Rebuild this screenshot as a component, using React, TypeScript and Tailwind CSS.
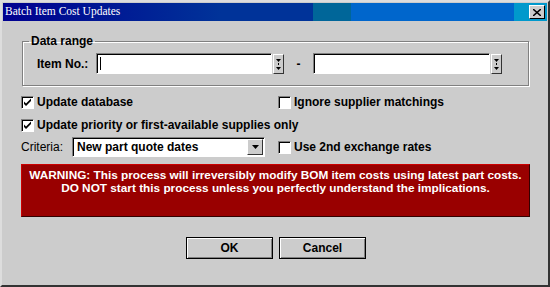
import React from "react";

const FONT = { fontFamily: '"Liberation Sans", Arial, sans-serif' };

function Spin() {
  return (
    <div className="w-[11px] h-[20px] bg-[#cccccc] border border-t-white border-l-white border-r-[#333] border-b-[#333] flex items-center justify-center">
      <svg width="5" height="14" viewBox="0 0 5 14">
        <path d="M0 2h5L2.5 5z" fill="#000" />
        <rect x="2" y="6" width="1" height="2" fill="#000" />
        <path d="M0 10h5L2.5 13z" fill="#000" />
      </svg>
    </div>
  );
}

function Check({ checked, label, bold = true }: { checked?: boolean; label: string; bold?: boolean }) {
  return (
    <label className="flex items-center gap-[3px] h-[18px]">
      <span className="w-[13px] h-[13px] bg-white border border-t-[#808080] border-l-[#808080] border-r-white border-b-white shadow-[inset_1px_1px_0_#000] flex items-center justify-center">
        {checked && (
          <svg width="9" height="9" viewBox="0 0 9 9">
            <path d="M1 3.5l2 2 5-5v2.5l-5 5-2-2z" fill="#000" />
          </svg>
        )}
      </span>
      <span className={`text-[12px] text-black ${bold ? "font-bold" : ""}`}>{label}</span>
    </label>
  );
}

function Btn({ children }: { children: React.ReactNode }) {
  return (
    <button className="w-[87px] h-[22px] bg-[#cccccc] border border-black shadow-[inset_1px_1px_0_#fff,inset_-1px_-1px_0_#808080] text-[12px] font-bold text-black">
      {children}
    </button>
  );
}

export default function App() {
  return (
    <div
      style={FONT}
      className="w-[550px] h-[287px] bg-[#cccccc] border-[2px] border-t-[#dddddd] border-l-[#dddddd] border-r-[#333] border-b-[#333] p-[1px] flex flex-col"
    >
      {/* Title bar */}
      <div className="h-[18px] flex items-center justify-between bg-[linear-gradient(90deg,#000090_0%,#003399_40%,#003399_57%,#006699_57%,#006699_64%,#0066cc_64%,#0066cc_94%,#0099cc_94%)]">
        <span
          className="text-white text-[11.5px] pl-[2px] leading-none"
          style={{ fontFamily: '"Liberation Serif", "Times New Roman", serif' }}
        >
          Batch Item Cost Updates
        </span>
        <button className="w-[16px] h-[14px] mr-[2px] bg-[#cccccc] border border-t-white border-l-white border-r-black border-b-black flex items-center justify-center">
          <svg width="8" height="7" viewBox="0 0 8 7">
            <path d="M0 0l8 7M8 0L0 7" stroke="#000" strokeWidth="1.5" />
          </svg>
        </button>
      </div>

      <div className="flex flex-col px-[16px]">
        {/* Data range group */}
        <fieldset className="mt-[13px] ml-[3px] w-[507px] h-[52px] border border-[#808080] shadow-[1px_1px_0_#fff,inset_1px_1px_0_#fff] px-[6px]">
          <legend className="px-[2px] text-[12px] font-bold text-black leading-[14px]">Data range</legend>
          <div className="flex items-center mt-[5px]">
            <span className="text-[12px] font-bold ml-[8px] w-[59px]">Item No.:</span>
            <div className="w-[176px] h-[21px] bg-white border border-t-[#808080] border-l-[#808080] border-r-white border-b-white shadow-[inset_1px_1px_0_#000] flex items-center pl-[3px]">
              <span className="w-px h-[13px] bg-black" />
            </div>
            <div className="ml-[1px]">
              <Spin />
            </div>
            <span className="text-[12px] font-bold w-[29px] text-center">-</span>
            <div className="w-[177px] h-[21px] bg-white border border-t-[#808080] border-l-[#808080] border-r-white border-b-white shadow-[inset_1px_1px_0_#000]" />
            <div className="ml-[1px]">
              <Spin />
            </div>
          </div>
        </fieldset>

        {/* Options */}
        <div className="grid grid-cols-[257px_1fr] ml-[2px] mt-[7px] gap-y-[5px] items-center">
          <Check checked label="Update database" />
          <Check label="Ignore supplier matchings" />
          <div className="col-span-2">
            <Check checked label="Update priority or first-available supplies only" />
          </div>
        </div>
        <div className="grid grid-cols-[257px_1fr] ml-[2px] mt-[3px] items-center">
          <div className="flex items-center">
            <span className="text-[12px] w-[51px]">Criteria:</span>
            <div className="w-[193px] h-[20px] bg-white border border-t-[#808080] border-l-[#808080] border-r-white border-b-white shadow-[inset_1px_1px_0_#000] flex items-center justify-between pl-[4px] pr-[1px]">
              <span className="text-[12px] font-bold">New part quote dates</span>
              <div className="w-[16px] h-[16px] bg-[#cccccc] border border-t-white border-l-white border-r-[#333] border-b-[#333] flex items-center justify-center">
                <svg width="7" height="4" viewBox="0 0 7 4">
                  <path d="M0 0h7L3.5 4z" fill="#000" />
                </svg>
              </div>
            </div>
          </div>
          <Check label="Use 2nd exchange rates" />
        </div>

        {/* Warning */}
        <div className="mt-[7px] ml-[2px] w-[509px] h-[53px] bg-[#990000] border border-t-[#cc0000] border-l-[#cc0000] border-r-[#330000] border-b-[#330000] pt-[4px] text-center text-white text-[11.8px] font-bold leading-[13px]">
          <div>WARNING: This process will irreversibly modify BOM item costs using latest part costs.</div>
          <div>DO NOT start this process unless you perfectly understand the implications.</div>
        </div>

        {/* Buttons */}
        <div className="flex justify-center gap-[6px] mt-[20px] ml-[2px]">
          <Btn>OK</Btn>
          <Btn>Cancel</Btn>
        </div>
      </div>
    </div>
  );
}
